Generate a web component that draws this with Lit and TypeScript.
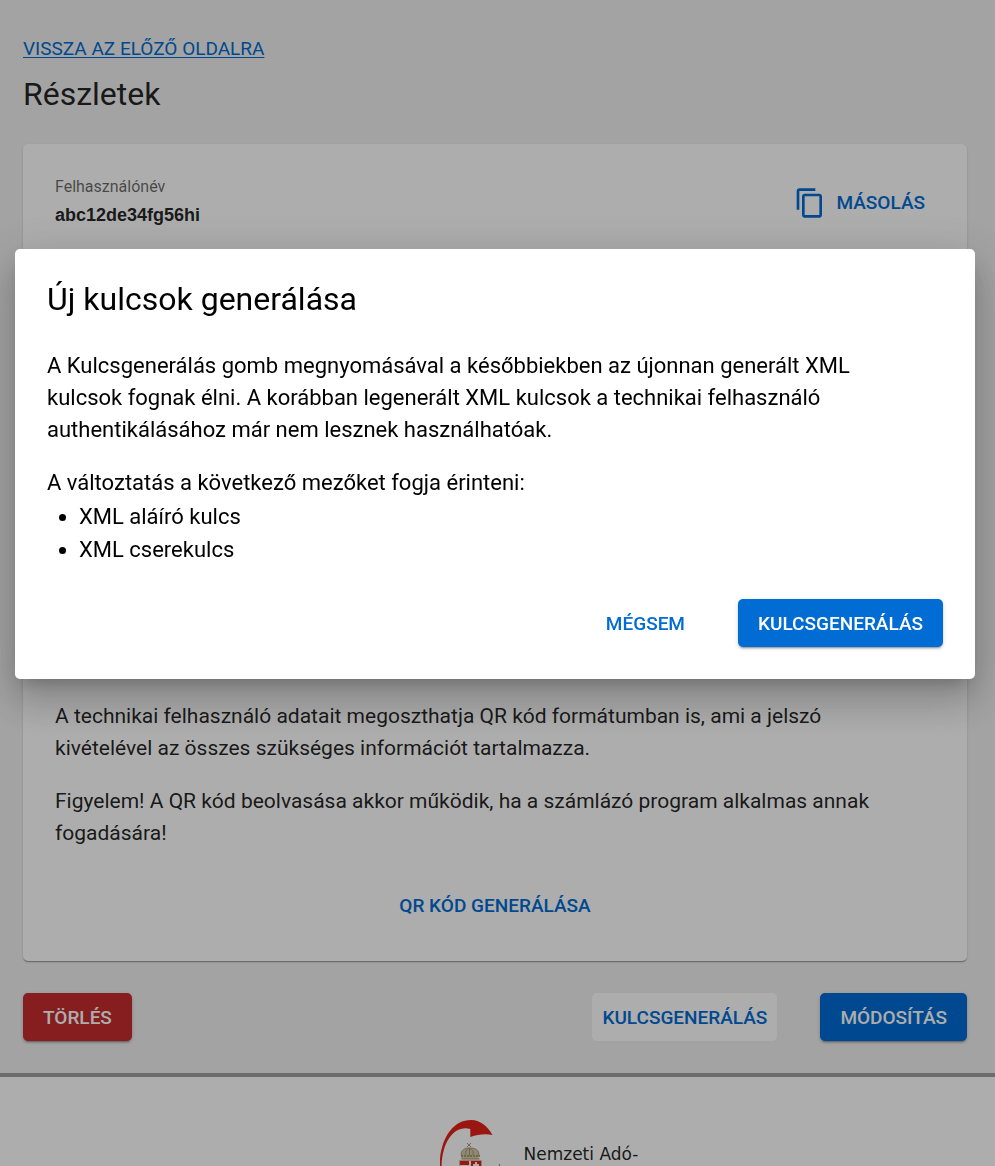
import { LitElement, html, css } from "lit";
import { customElement } from "lit/decorators.js";

@customElement("app-root")
export class AppRoot extends LitElement {
  static styles = css`
    :host {
      display: block;
      height: 100vh;
      overflow: hidden;
      font-family: Roboto, sans-serif;
      color: rgba(0, 0, 0, 0.87);
      background: #f1f1f1;
    }
    * {
      box-sizing: border-box;
    }
    h1,
    h2,
    p,
    ul,
    dl,
    dd {
      margin: 0;
    }
    .page {
      display: flex;
      flex-direction: column;
      height: 100%;
    }
    main {
      flex: none;
      padding: 32px 28px 32px 23px;
    }
    .back {
      display: inline-block;
      font-size: 19px;
      line-height: 34px;
      color: #006cd4;
      text-transform: uppercase;
      text-underline-offset: 2px;
    }
    h1,
    h2 {
      font-size: 32px;
      line-height: 40px;
      font-weight: 400;
    }
    h1 {
      margin-top: 8px;
    }
    .card {
      margin-top: 30px;
      padding: 32px;
      border-radius: 5px;
      background: #fff;
      box-shadow: 0 2px 1px -1px rgba(0, 0, 0, 0.2),
        0 1px 1px rgba(0, 0, 0, 0.14), 0 1px 3px rgba(0, 0, 0, 0.12);
    }
    .field {
      display: flex;
      justify-content: space-between;
      align-items: center;
    }
    dt {
      font-size: 16px;
      line-height: 22px;
      color: rgba(0, 0, 0, 0.6);
    }
    dd {
      margin-top: 5px;
      font: bold 18px/24px "Liberation Sans", sans-serif;
    }
    .qr {
      margin-top: 473px;
    }
    .text {
      font-size: 21px;
      line-height: 32px;
      padding-right: 32px;
    }
    .text + .text {
      margin-top: 21px;
    }
    .center {
      display: flex;
      justify-content: center;
      margin-top: 32px;
    }
    button {
      display: inline-flex;
      align-items: center;
      justify-content: center;
      height: 48px;
      padding: 2px 20px 0;
      border: 0;
      border-radius: 5px;
      background: none;
      color: #006cd4;
      font: 500 19px/24px Roboto, sans-serif;
      text-transform: uppercase;
    }
    .flat {
      padding: 2px 10px 0;
    }
    .copy {
      gap: 10px;
    }
    .copy svg {
      width: 32px;
      height: 32px;
      fill: currentColor;
    }
    .light {
      background: #fff;
    }
    .solid {
      background: #006cd4;
      color: #fff;
      box-shadow: 0 3px 1px -2px rgba(0, 0, 0, 0.2),
        0 2px 2px rgba(0, 0, 0, 0.14), 0 1px 5px rgba(0, 0, 0, 0.12);
    }
    .danger {
      background: #c62b2e;
    }
    .actions {
      display: flex;
      gap: 43px;
      margin-top: 32px;
    }
    .push {
      margin-left: auto;
    }
    footer {
      flex: 1;
      min-height: 0;
      overflow: hidden;
      display: flex;
      justify-content: center;
      gap: 20px;
      padding: 41px 0 0 100px;
      border-top: 4px solid #a0a0a0;
      background: #fff;
    }
    .logo {
      flex: none;
      width: 64px;
      height: 96px;
    }
    .org {
      width: 132px;
      padding-top: 24px;
      font: 17px/24px "DejaVu Sans", sans-serif;
    }
    .overlay {
      position: fixed;
      inset: 0;
      padding: 249px 20px 0 15px;
      background: rgba(0, 0, 0, 0.32);
    }
    .dialog {
      padding: 30px 32px 32px;
      border-radius: 5px;
      background: #fff;
      color: #000;
      box-shadow: 0 11px 15px -7px rgba(0, 0, 0, 0.2),
        0 24px 38px 3px rgba(0, 0, 0, 0.14), 0 9px 46px 8px rgba(0, 0, 0, 0.12);
    }
    .dialog h2 {
      margin-bottom: 31px;
    }
    .dialog .text,
    ul {
      font-size: 22px;
    }
    ul {
      margin-top: 1px;
      padding-left: 32px;
      line-height: 33px;
    }
    .dialog .actions {
      justify-content: flex-end;
      margin-top: 33px;
    }
  `;

  render() {
    return html`
      <div class="page">
        <main>
          <a class="back" href="#">Vissza az előző oldalra</a>
          <h1>Részletek</h1>
          <section class="card">
            <div class="field">
              <dl>
                <dt>Felhasználónév</dt>
                <dd>abc12de34fg56hi</dd>
              </dl>
              <button class="flat copy" type="button">
                <svg viewBox="0 0 24 24" aria-hidden="true">
                  <path
                    d="M16 1H4C2.9 1 2 1.900 2 3V17H4V3H16V1ZM19 5H8C6.900 5 6 5.900 6 7V21C6 22.100 6.900 23 8 23H19C20.100 23 21 22.100 21 21V7C21 5.900 20.100 5 19 5ZM19 21H8V7H19V21Z"
                  />
                </svg>
                Másolás
              </button>
            </div>
            <div class="qr">
              <p class="text">
                A technikai felhasználó adatait megoszthatja QR kód formátumban
                is, ami a jelszó kivételével az összes szükséges információt
                tartalmazza.
              </p>
              <p class="text">
                Figyelem! A QR kód beolvasása akkor működik, ha a számlázó
                program alkalmas annak fogadására!
              </p>
              <div class="center">
                <button class="flat" type="button">QR kód generálása</button>
              </div>
            </div>
          </section>
          <div class="actions">
            <button class="solid danger" type="button">Törlés</button>
            <button class="flat light push" type="button">
              Kulcsgenerálás
            </button>
            <button class="solid" type="button">Módosítás</button>
          </div>
        </main>
        <footer>
          <svg class="logo" viewBox="0 0 64 96" aria-hidden="true">
            <path
              fill="#e4231a"
              d="M-0.500 50C-0.500 22 12 2 31 2C41 2 48 9 52.500 17C45 15.500 38 16.500 30.300 19V11C15 7 2 22 1.500 50Z"
            />
            <path
              fill="#d3c9ac"
              d="M21.500 41C19.500 33 25 30 29.500 30C35 30 41 33 38.500 41Z"
            />
            <g fill="none" stroke="#a8996b">
              <path d="M27 25l4 4M31 25l-4 4" />
              <path d="M21.500 38C20 32 25 30 29.500 30C35 30 40 32 38.500 38" />
              <path d="M26 37C25 33 27 31 29 30.500C32 31 34 33 33 37M29.500 30V38" />
              <path stroke-width="2" stroke-dasharray="2 1" d="M21 38H40" />
              <path d="M21.500 41H39.500" />
            </g>
            <path
              fill="#e4231a"
              stroke="#c9c2b0"
              d="M19.500 42.500H41.500V60Q41 70 30.500 74Q20 70 19.500 60Z"
            />
            <path
              fill="#fff"
              d="M29 43h2v28h-2zM20 47h9v3h-9zM20 53h9v3h-9zM35 44h2v26h-2zM33 46h6v2h-6z"
            />
            <path fill="#6f9c84" d="M59 46h1v4h-1z" />
          </svg>
          <div class="org">Nemzeti Adó-</div>
        </footer>
      </div>
      <div class="overlay">
        <div class="dialog" role="dialog" aria-modal="true" aria-labelledby="t">
          <h2 id="t">Új kulcsok generálása</h2>
          <p class="text">
            A Kulcsgenerálás gomb megnyomásával a későbbiekben az újonnan
            generált XML kulcsok fognak élni. A korábban legenerált XML kulcsok
            a technikai felhasználó authentikálásához már nem lesznek
            használhatóak.
          </p>
          <p class="text">A változtatás a következő mezőket fogja érinteni:</p>
          <ul>
            <li>XML aláíró kulcs</li>
            <li>XML cserekulcs</li>
          </ul>
          <div class="actions">
            <button class="flat" type="button">Mégsem</button>
            <button class="solid" type="button">Kulcsgenerálás</button>
          </div>
        </div>
      </div>
    `;
  }
}
